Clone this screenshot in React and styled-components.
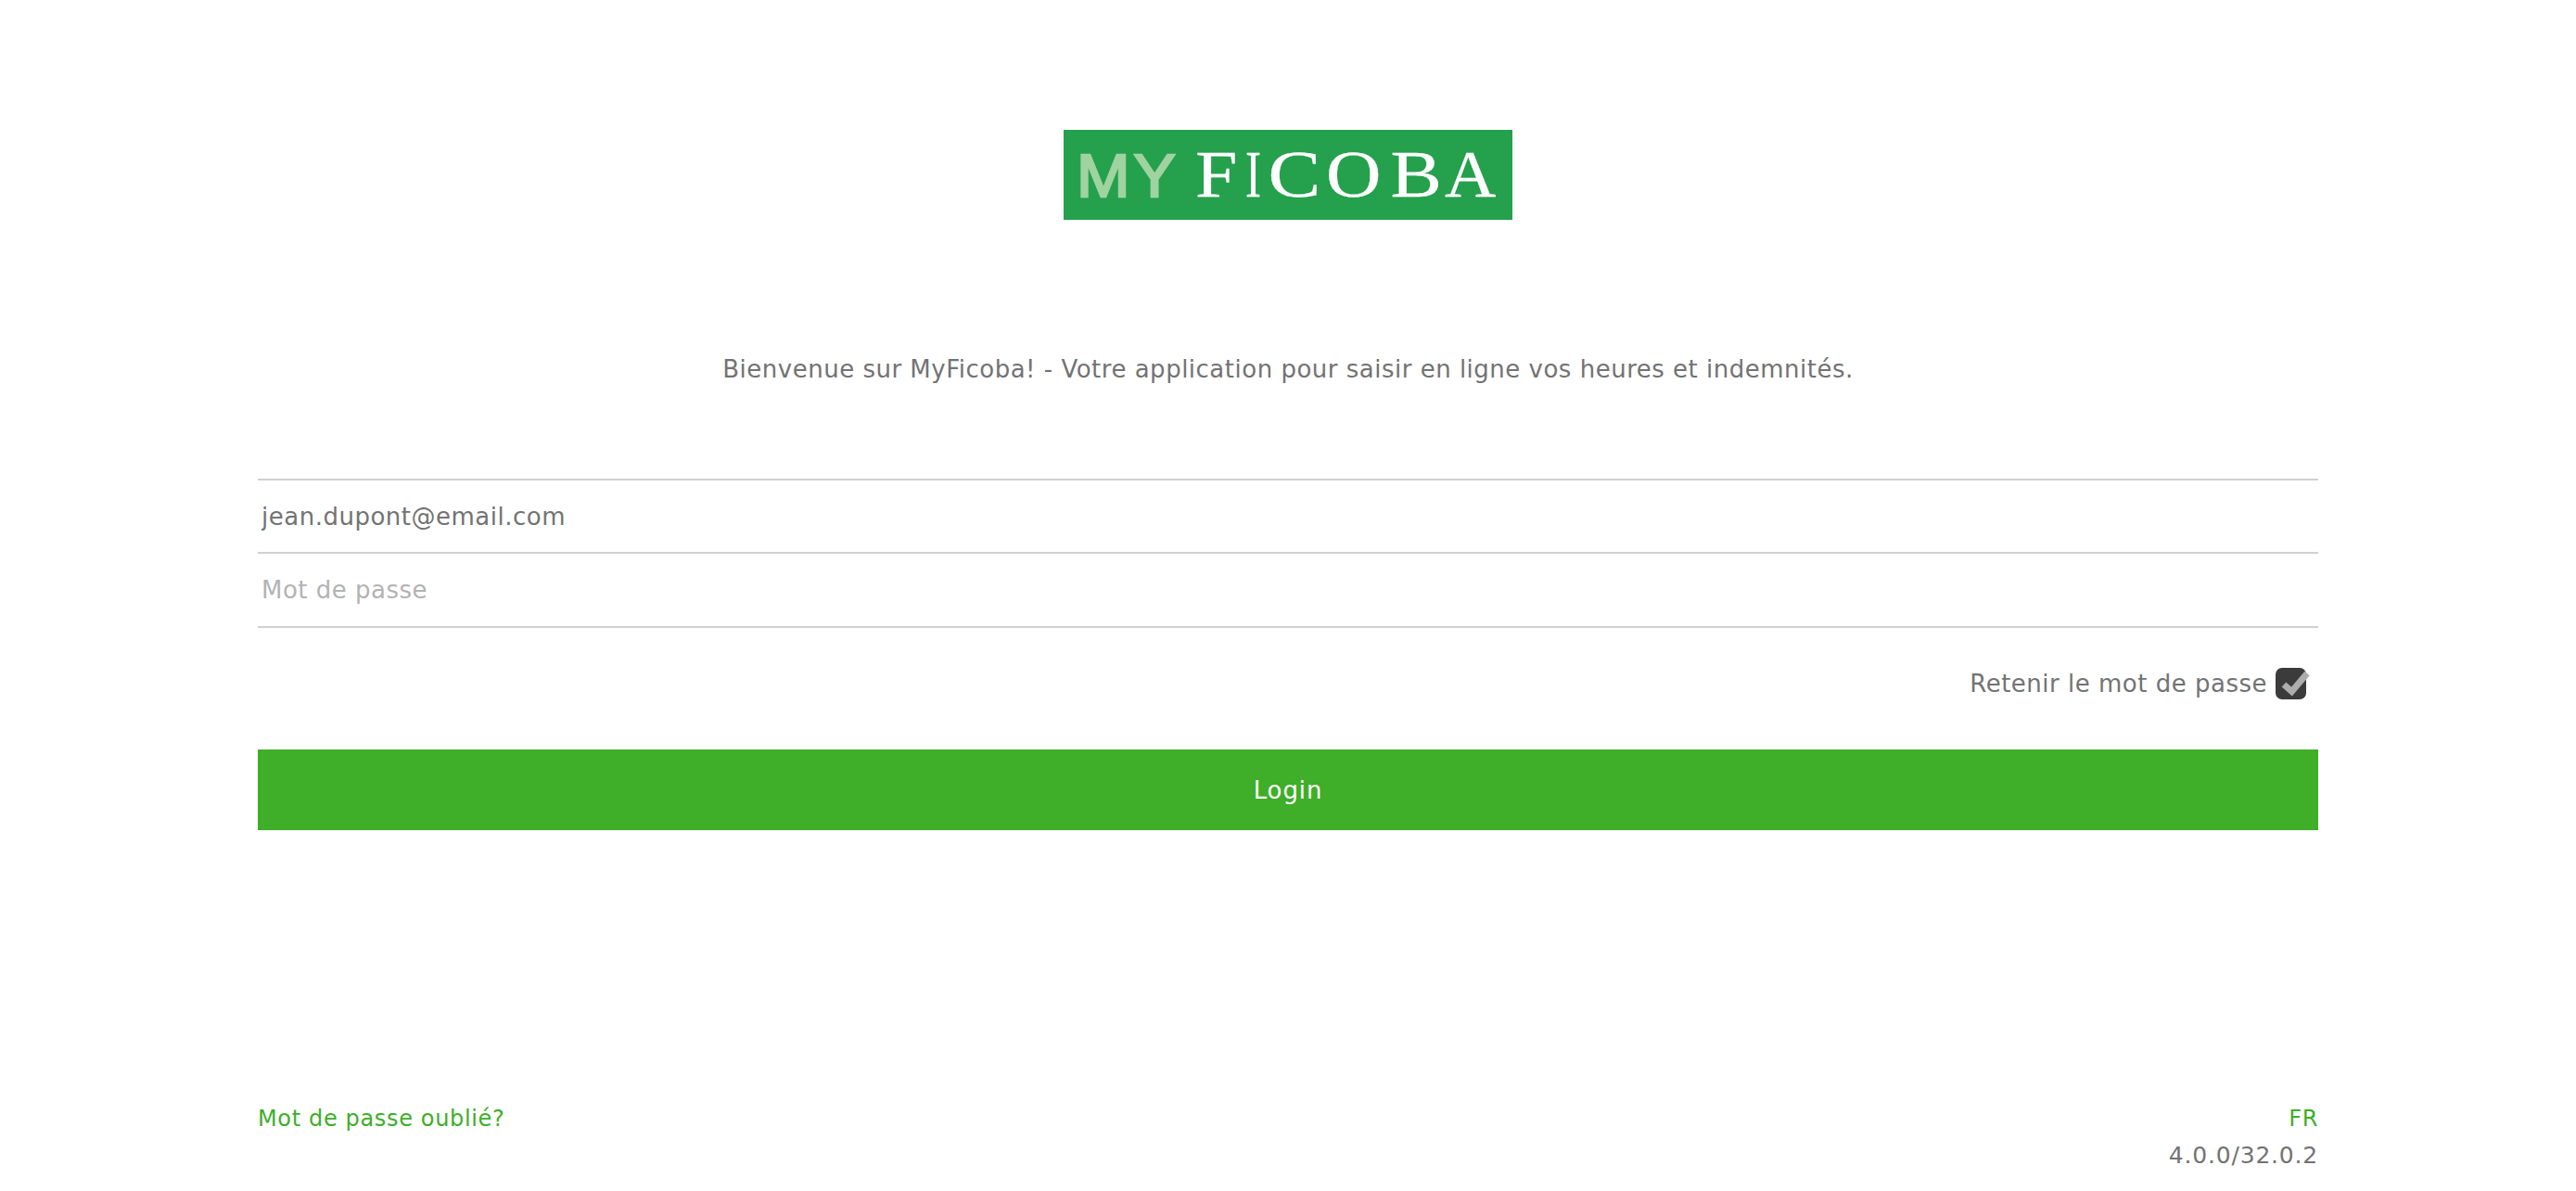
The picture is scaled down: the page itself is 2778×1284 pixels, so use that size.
import React from 'react';
import styled, { createGlobalStyle } from 'styled-components';

const GREEN = '#3eae2a';
const GREY = '#737373';

const Global = createGlobalStyle`
  html, body {
    margin: 0;
    padding: 0;
    background: #fff;
  }
  * {
    box-sizing: border-box;
  }
`;

const Page = styled.div`
  height: 1284px;
  padding: 140px 278px 0;
  display: flex;
  flex-direction: column;
  font-family: "DejaVu Sans", sans-serif;
  font-size: 26px;
  letter-spacing: 0.5px;
  color: ${GREY};
`;

const LogoBox = styled.svg`
  display: block;
  align-self: center;
  width: 484px;
  height: 97px;
`;

const Welcome = styled.p`
  margin: 144px 0 0;
  height: 34px;
  line-height: 34px;
  text-align: center;
`;

const Fields = styled.div`
  margin-top: 101px;
  border-top: 2px solid #d0d0d0;
`;

const Field = styled.input`
  display: block;
  width: 100%;
  height: ${({ $tall }) => ($tall ? 80 : 79)}px;
  padding: 0 4px;
  border: 0;
  border-bottom: 2px solid #d0d0d0;
  outline: none;
  background: transparent;
  font: inherit;
  letter-spacing: inherit;
  color: ${GREY};
  &::placeholder {
    color: #b3b3b3;
    opacity: 1;
  }
`;

const RememberRow = styled.div`
  margin-top: 42px;
  padding-right: 8px;
  height: 36px;
  display: flex;
  justify-content: flex-end;
  align-items: center;
  gap: 9px;
`;

const Check = styled.svg`
  display: block;
  width: 38px;
  height: 36px;
`;

const LoginButton = styled.button`
  display: block;
  width: 100%;
  height: 87px;
  margin-top: 53px;
  border: 0;
  background: #3fae29;
  color: #fff;
  font: inherit;
  letter-spacing: 0.9px;
`;

const Footer = styled.div`
  margin-top: auto;
  padding-bottom: 18px;
  display: flex;
  justify-content: space-between;
  align-items: flex-start;
  line-height: 40px;
`;

const FooterLink = styled.a`
  color: ${GREEN};
  font-size: 24px;
  letter-spacing: 0.65px;
  text-decoration: none;
`;

const Version = styled.span`
  font-size: 25px;
  letter-spacing: 0.8px;
`;

const FooterRight = styled.div`
  display: flex;
  flex-direction: column;
  align-items: flex-end;
`;

// each logo letter is stretched on its own, the original lettering is extended
const MY_LETTERS = [
  { ch: 'M', x: 14, sx: 1.08 },
  { ch: 'Y', x: 75.5, sx: 1.06 },
];

const FICOBA_LETTERS = [
  { ch: 'F', x: 142, sx: 1.15 },
  { ch: 'I', x: 196, sx: 0.72 },
  { ch: 'C', x: 220.6, sx: 1.2 },
  { ch: 'O', x: 283, sx: 1.16 },
  { ch: 'B', x: 352.6, sx: 1.17 },
  { ch: 'A', x: 411, sx: 1.08 },
];

const Logo = () => (
  <LogoBox viewBox="0 0 484 97" role="img" aria-label="My Ficoba">
    <rect width="484" height="97" fill="#25a04c" />
    <g fontFamily="Liberation Sans, sans-serif" fontSize="64" fill="#9fd3a0" stroke="#9fd3a0" strokeWidth="2.4">
      {MY_LETTERS.map((l) => (
        <text key={l.ch} transform={`translate(${l.x} 72) scale(${l.sx} 1)`}>
          {l.ch}
        </text>
      ))}
    </g>
    <g fontFamily="Liberation Serif, serif" fontSize="71" fill="#fff" stroke="#fff" strokeWidth="0.3">
      {FICOBA_LETTERS.map((l) => (
        <text key={l.ch} transform={`translate(${l.x} 72) scale(${l.sx} 1)`}>
          {l.ch}
        </text>
      ))}
    </g>
  </LogoBox>
);

const CheckIcon = () => (
  <Check viewBox="0 0 38 36">
    <rect x="0" y="1" width="33" height="34" rx="7" fill="#3b3b3b" />
    <path d="M9 19l8.5 7.5L34 7" fill="none" stroke="#adadad" strokeWidth="7" />
  </Check>
);

export default function App() {
  return (
    <Page>
      <Global />
      <Logo />
      <Welcome>Bienvenue sur MyFicoba! - Votre application pour saisir en ligne vos heures et indemnités.</Welcome>
      <Fields>
        <Field type="text" readOnly value="jean.dupont@email.com" />
        <Field $tall type="password" readOnly placeholder="Mot de passe" />
      </Fields>
      <RememberRow>
        <span>Retenir le mot de passe</span>
        <CheckIcon />
      </RememberRow>
      <LoginButton type="button">Login</LoginButton>
      <Footer>
        <FooterLink href="#">Mot de passe oublié?</FooterLink>
        <FooterRight>
          <FooterLink href="#">FR</FooterLink>
          <Version>4.0.0/32.0.2</Version>
        </FooterRight>
      </Footer>
    </Page>
  );
}
